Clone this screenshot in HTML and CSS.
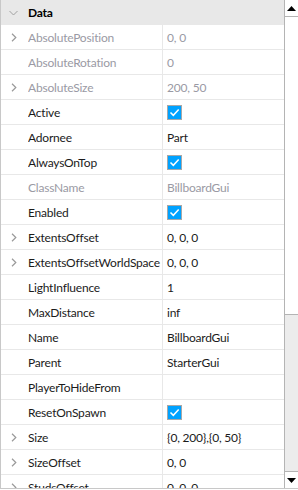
FILE: index.html
```html
<!DOCTYPE html>
<html>
<head>
<meta charset="utf-8">
<link rel="stylesheet" href="styles.css">
</head>
<body>
<div class="panel">
  <div class="list">
    <div class="header">
      <span class="chev"><svg width="9" height="6" viewBox="0 0 9 6"><path d="M0.5 1 L4.5 5 L8.5 1" fill="none" stroke="#a0a0a0" stroke-width="1"/></svg></span>
      <span class="title">Data</span>
    </div>
    <div class="row ro"><span class="chev"><svg width="6" height="9" viewBox="0 0 6 9"><path d="M1 0.8 L4.8 4.5 L1 8.2" fill="none" stroke="#9a9a9a" stroke-width="1.2"/></svg></span><span class="name">AbsolutePosition</span><span class="val">0, 0</span></div>
    <div class="row ro"><span class="chev"></span><span class="name">AbsoluteRotation</span><span class="val">0</span></div>
    <div class="row ro"><span class="chev"><svg width="6" height="9" viewBox="0 0 6 9"><path d="M1 0.8 L4.8 4.5 L1 8.2" fill="none" stroke="#9a9a9a" stroke-width="1.2"/></svg></span><span class="name">AbsoluteSize</span><span class="val">200, 50</span></div>
    <div class="row"><span class="chev"></span><span class="name">Active</span><span class="val"><span class="cb"><svg width="11" height="9" viewBox="0 0 11 9"><path d="M1.5 4.5 L4.3 7.3 L9.7 1.5" fill="none" stroke="#fff" stroke-width="1.5"/></svg></span></span></div>
    <div class="row"><span class="chev"></span><span class="name">Adornee</span><span class="val">Part</span></div>
    <div class="row"><span class="chev"></span><span class="name">AlwaysOnTop</span><span class="val"><span class="cb"><svg width="11" height="9" viewBox="0 0 11 9"><path d="M1.5 4.5 L4.3 7.3 L9.7 1.5" fill="none" stroke="#fff" stroke-width="1.5"/></svg></span></span></div>
    <div class="row ro"><span class="chev"></span><span class="name">ClassName</span><span class="val">BillboardGui</span></div>
    <div class="row"><span class="chev"></span><span class="name">Enabled</span><span class="val"><span class="cb"><svg width="11" height="9" viewBox="0 0 11 9"><path d="M1.5 4.5 L4.3 7.3 L9.7 1.5" fill="none" stroke="#fff" stroke-width="1.5"/></svg></span></span></div>
    <div class="row"><span class="chev"><svg width="6" height="9" viewBox="0 0 6 9"><path d="M1 0.8 L4.8 4.5 L1 8.2" fill="none" stroke="#9a9a9a" stroke-width="1.2"/></svg></span><span class="name">ExtentsOffset</span><span class="val">0, 0, 0</span></div>
    <div class="row"><span class="chev"><svg width="6" height="9" viewBox="0 0 6 9"><path d="M1 0.8 L4.8 4.5 L1 8.2" fill="none" stroke="#9a9a9a" stroke-width="1.2"/></svg></span><span class="name">ExtentsOffsetWorldSpace</span><span class="val">0, 0, 0</span></div>
    <div class="row"><span class="chev"></span><span class="name">LightInfluence</span><span class="val">1</span></div>
    <div class="row"><span class="chev"></span><span class="name">MaxDistance</span><span class="val">inf</span></div>
    <div class="row"><span class="chev"></span><span class="name">Name</span><span class="val">BillboardGui</span></div>
    <div class="row"><span class="chev"></span><span class="name">Parent</span><span class="val">StarterGui</span></div>
    <div class="row"><span class="chev"></span><span class="name">PlayerToHideFrom</span><span class="val"></span></div>
    <div class="row"><span class="chev"></span><span class="name">ResetOnSpawn</span><span class="val"><span class="cb"><svg width="11" height="9" viewBox="0 0 11 9"><path d="M1.5 4.5 L4.3 7.3 L9.7 1.5" fill="none" stroke="#fff" stroke-width="1.5"/></svg></span></span></div>
    <div class="row"><span class="chev"><svg width="6" height="9" viewBox="0 0 6 9"><path d="M1 0.8 L4.8 4.5 L1 8.2" fill="none" stroke="#9a9a9a" stroke-width="1.2"/></svg></span><span class="name">Size</span><span class="val">{0, 200},{0, 50}</span></div>
    <div class="row"><span class="chev"><svg width="6" height="9" viewBox="0 0 6 9"><path d="M1 0.8 L4.8 4.5 L1 8.2" fill="none" stroke="#9a9a9a" stroke-width="1.2"/></svg></span><span class="name">SizeOffset</span><span class="val">0, 0</span></div>
    <div class="row"><span class="chev"><svg width="6" height="9" viewBox="0 0 6 9"><path d="M1 0.8 L4.8 4.5 L1 8.2" fill="none" stroke="#9a9a9a" stroke-width="1.2"/></svg></span><span class="name">StudsOffset</span><span class="val">0, 0, 0</span></div>
  </div>
  <div class="scroll">
    <div class="btn"><svg width="9" height="5" viewBox="0 0 9 5"><path d="M0 5 L4.5 0 L9 5 Z" fill="#000"/></svg></div>
    <div class="track"></div>
    <div class="thumb"></div>
    <div class="btn down"><svg width="9" height="5" viewBox="0 0 9 5"><path d="M0 0 L4.5 5 L9 0 Z" fill="#000"/></svg></div>
  </div>
</div>
</body>
</html>
```
FILE: styles.css
```css
html, body {
  margin: 0;
  padding: 0;
  background: #fff;
}
.panel {
  width: 298px;
  height: 489px;
  display: flex;
  overflow: hidden;
  border-left: 1px solid #c8c8c8;
  border-bottom: 1px solid #c8c8c8;
  box-sizing: border-box;
  font-family: "Lato", "Open Sans", sans-serif;
  font-size: 12px;
  letter-spacing: -0.2px;
  color: #1b1b1b;
}
.list {
  flex: 1;
  overflow: hidden;
}
.header {
  height: 25px;
  background: #e8e8e8;
  display: flex;
  align-items: center;
}
.header .chev {
  width: 27px;
  display: flex;
  justify-content: center;
  padding-right: 2px;
  box-sizing: border-box;
}
.title {
  font-weight: 700;
  color: #000;
}
.row {
  height: 25px;
  box-sizing: border-box;
  border-bottom: 1px solid #e8e8e8;
  display: flex;
  align-items: center;
}
.row .chev {
  width: 27px;
  flex: none;
  display: flex;
  justify-content: center;
  padding-right: 1px;
  box-sizing: border-box;
}
.name {
  width: 134px;
  flex: none;
  height: 100%;
  display: flex;
  align-items: center;
  border-right: 1px solid #e8e8e8;
  white-space: nowrap;
  overflow: hidden;
}
.val {
  padding-left: 4px;
  display: flex;
  align-items: center;
  white-space: nowrap;
}
.ro .name, .ro .val {
  color: #9a9aa4;
}
.cb {
  width: 15px;
  height: 15px;
  box-sizing: border-box;
  background: #00a2ff;
  border: 1px solid #a8a8a8;
  display: flex;
  align-items: center;
  justify-content: center;
}
.scroll {
  width: 13px;
  flex: none;
  border-left: 1px solid #b4b4b4;
  display: flex;
  flex-direction: column;
}
.btn {
  height: 16px;
  flex: none;
  display: flex;
  align-items: center;
  justify-content: center;
  border-bottom: 1px solid #b4b4b4;
}
.btn.down {
  border-bottom: none;
  border-top: 1px solid #b4b4b4;
}
.track {
  height: 297px;
  flex: none;
}
.thumb {
  flex: 1;
  background: #ececec;
  border-top: 1px solid #b4b4b4;
}
```
